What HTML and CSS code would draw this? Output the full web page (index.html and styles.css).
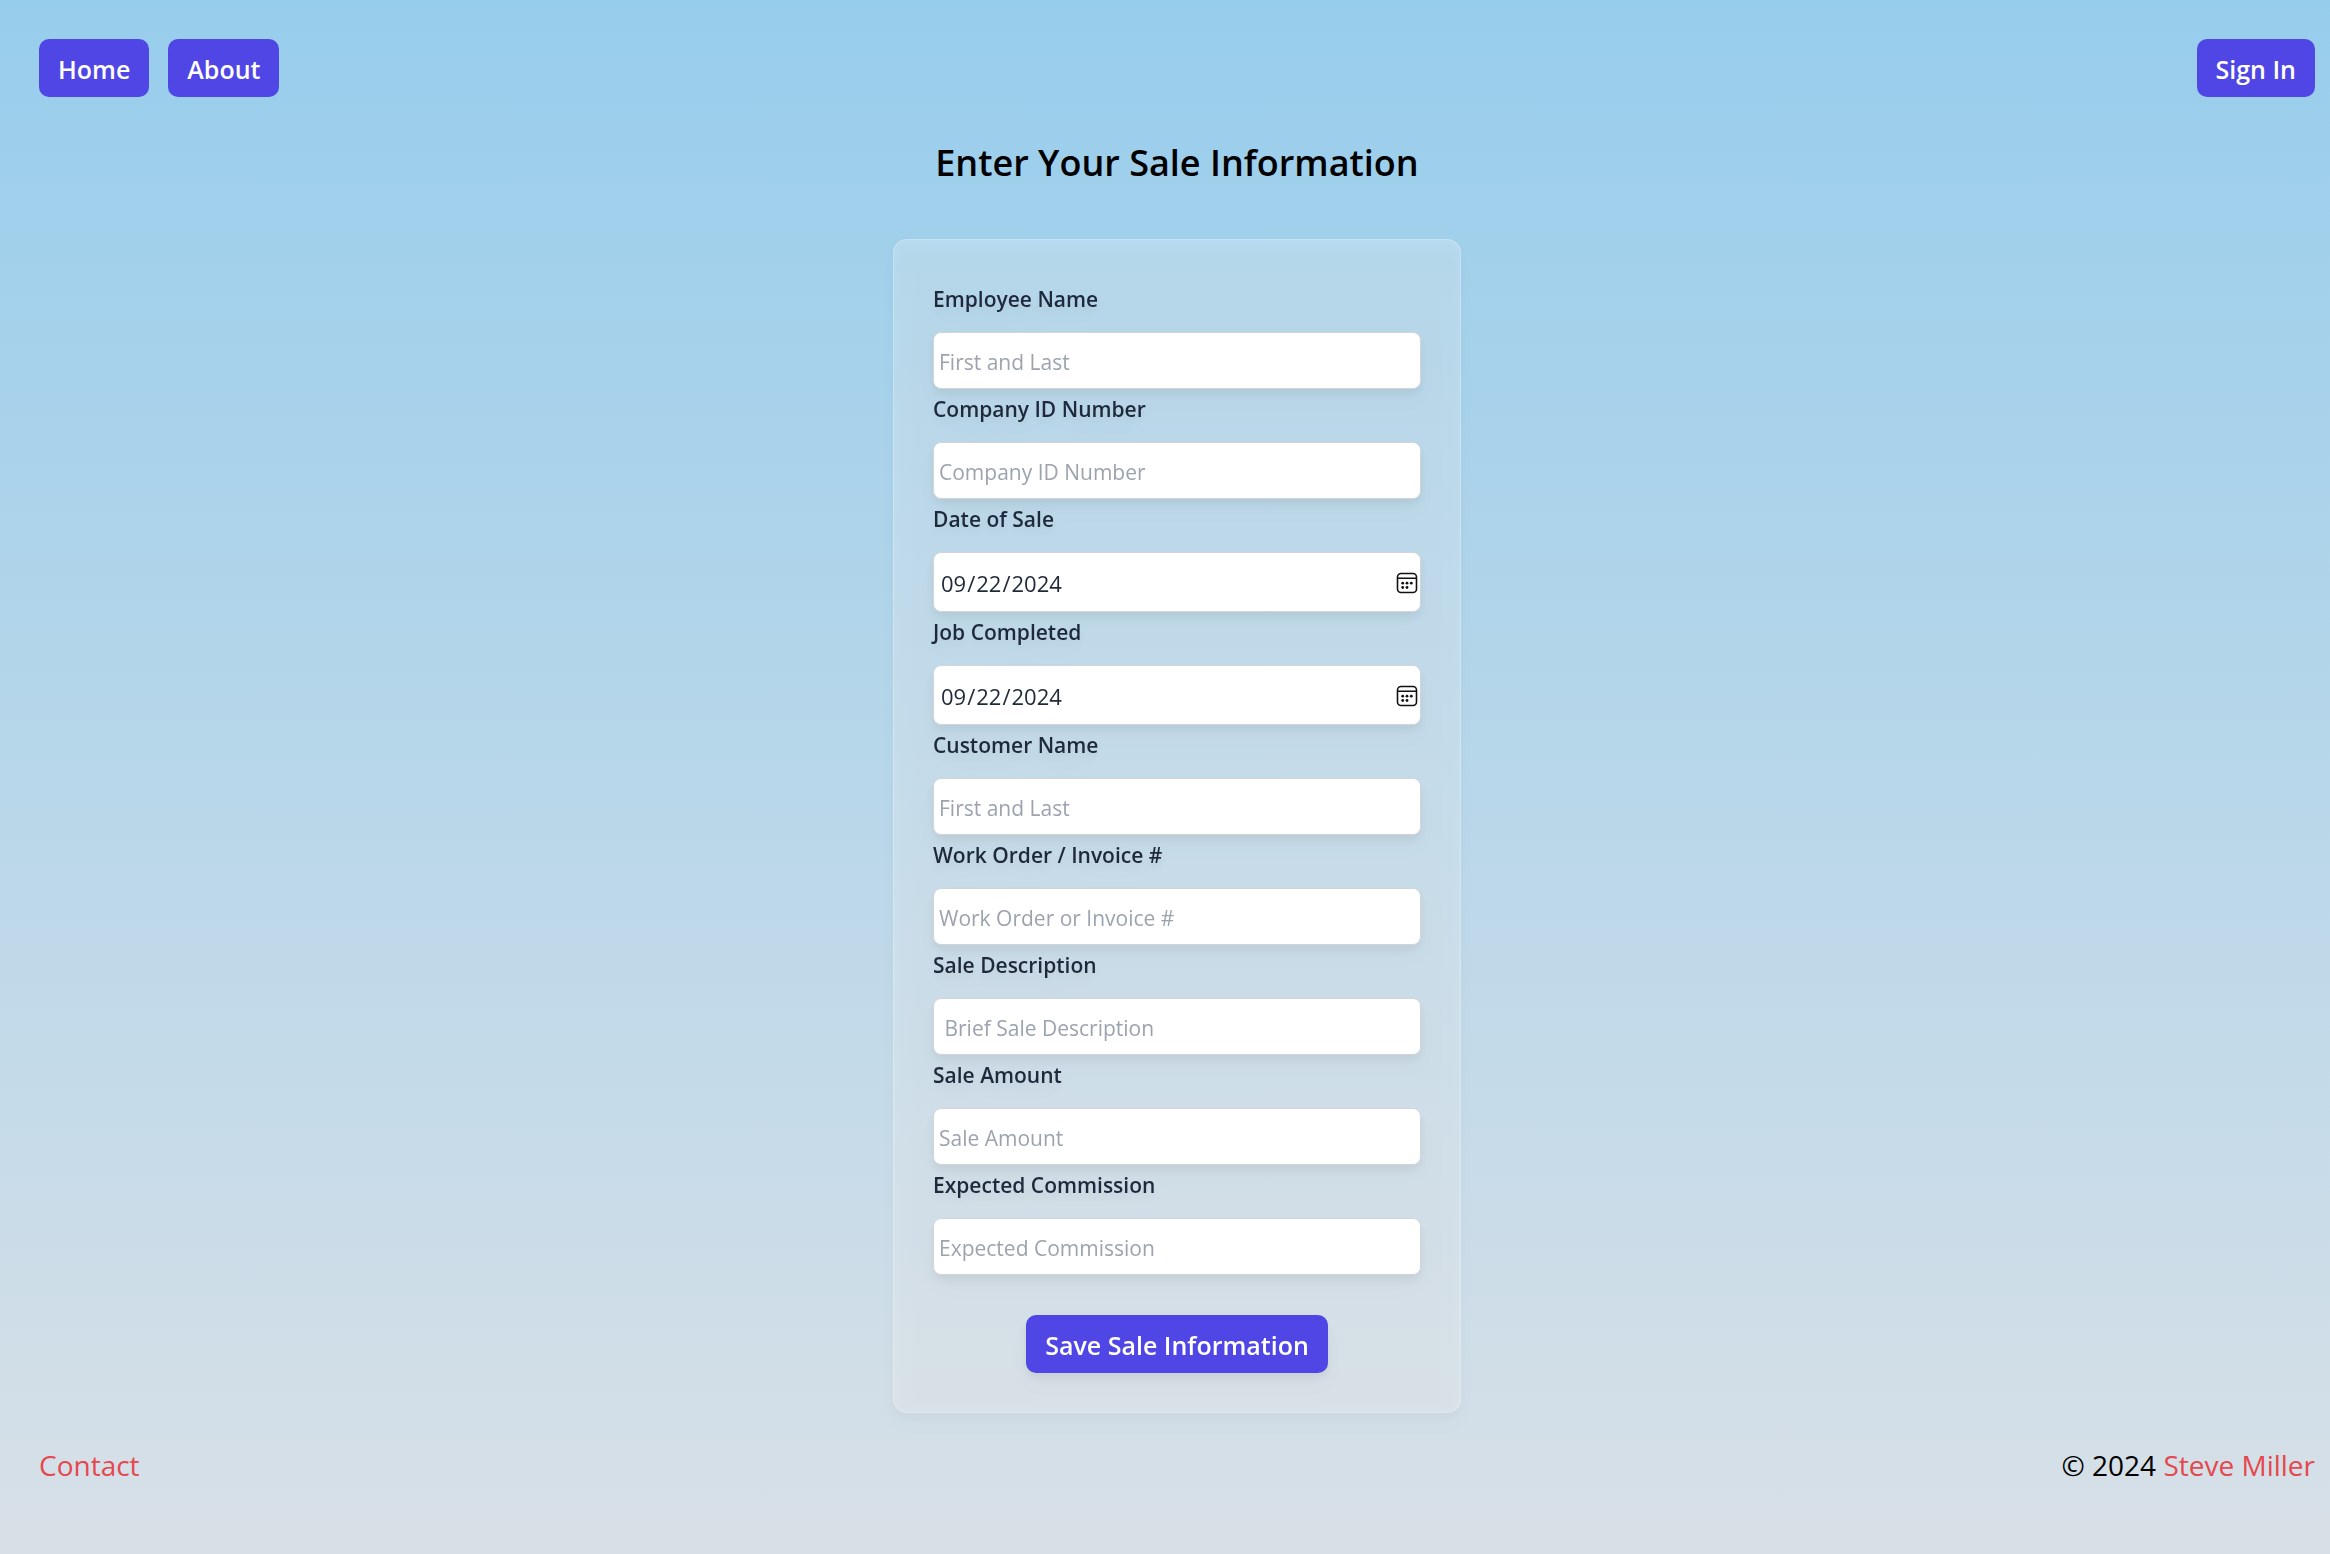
FILE: index.html
```html
<!DOCTYPE html>
<html lang="en">
<head>
  <meta charset="utf-8">
  <meta name="viewport" content="width=device-width, initial-scale=1">
  <title>Enter Your Sale Information</title>
  <link rel="stylesheet" href="styles.css">
</head>
<body>
  <header class="site-header">
    <nav class="site-nav">
      <button class="btn" type="button">Home</button>
      <button class="btn" type="button">About</button>
    </nav>
    <button class="btn" type="button">Sign In</button>
  </header>

  <main class="content">
    <h1 class="title">Enter Your Sale Information</h1>
    <form class="card">
      <label class="label" for="employee">Employee Name</label>
      <input class="field" id="employee" type="text" placeholder="First and Last">
      <label class="label" for="company-id">Company ID Number</label>
      <input class="field" id="company-id" type="text" placeholder="Company ID Number">
      <label class="label" for="sale-date">Date of Sale</label>
      <input class="field field-date" id="sale-date" type="date" value="2024-09-22">
      <label class="label" for="job-date">Job Completed</label>
      <input class="field field-date" id="job-date" type="date" value="2024-09-22">
      <label class="label" for="customer">Customer Name</label>
      <input class="field" id="customer" type="text" placeholder="First and Last">
      <label class="label" for="invoice">Work Order / Invoice #</label>
      <input class="field" id="invoice" type="text" placeholder="Work Order or Invoice #">
      <label class="label" for="description">Sale Description</label>
      <input class="field" id="description" type="text" placeholder=" Brief Sale Description">
      <label class="label" for="amount">Sale Amount</label>
      <input class="field" id="amount" type="text" placeholder="Sale Amount">
      <label class="label" for="commission">Expected Commission</label>
      <input class="field" id="commission" type="text" placeholder="Expected Commission">
      <button class="btn btn-save" type="submit">Save Sale Information</button>
    </form>
  </main>

  <footer class="site-footer">
    <a class="link" href="#contact">Contact</a>
    <p class="copyright">© 2024 <a class="link" href="#author">Steve Miller</a></p>
  </footer>
</body>
</html>
```
FILE: styles.css
```css
* {
  box-sizing: border-box;
}

body {
  margin: 0;
  min-height: 100vh;
  padding: 39px 15px 39px 39px;
  font-family: "Segoe UI", "Open Sans", sans-serif;
  color: #000;
  background: linear-gradient(to bottom, #97cdec, #d8e0e7);
}

.site-header,
.site-footer {
  display: flex;
  align-items: center;
  justify-content: space-between;
}

.site-nav {
  display: flex;
  gap: 19px;
}

.btn {
  height: 58px;
  padding: 2px 19px 0;
  border: 0;
  border-radius: 10px;
  font: inherit;
  font-size: 25px;
  font-weight: 600;
  color: #fff;
  background: #4f46e5;
  cursor: pointer;
}

.content {
  display: flex;
  flex-direction: column;
  align-items: center;
}

.title {
  margin: 42px 0 52px;
  font-size: 36px;
  font-weight: 600;
  line-height: 48px;
}

.card {
  display: flex;
  flex-direction: column;
  width: 100%;
  max-width: 568px;
  padding: 39px;
  border: 1px solid rgba(255, 255, 255, 0.2);
  border-radius: 14px;
  background: rgba(255, 255, 255, 0.25);
  filter: drop-shadow(0 12px 10px rgba(0, 0, 0, 0.04)) drop-shadow(0 5px 4px rgba(0, 0, 0, 0.1));
}

.label {
  padding: 5px 0 18px;
  font-size: 21px;
  font-weight: 600;
  line-height: 30px;
  color: #1e293b;
}

.field {
  height: 57px;
  padding: 2px 5px 0;
  border: 1px solid #d1d5db;
  border-radius: 8px;
  font: inherit;
  font-size: 21px;
  color: #1f2937;
  background: #fff;
}

.field::placeholder {
  color: #9ca3af;
  opacity: 1;
}

.field-date {
  height: 60px;
  padding: 2px 2px 0 6px;
  font-size: 22px;
}

.field-date::-webkit-datetime-edit,
.field-date::-webkit-datetime-edit-fields-wrapper {
  padding: 0;
}

.field-date::-webkit-calendar-picker-indicator {
  width: 22px;
  height: 22px;
  margin: 0;
  padding: 0;
  background: url("data:image/svg+xml,%3Csvg xmlns='http://www.w3.org/2000/svg' viewBox='0 0 22 22' fill='none' stroke='%23111'%3E%3Crect x='1.5' y='1.5' width='19' height='19' rx='3.5' stroke-width='1.6'/%3E%3Cpath d='M1.5 6.2h19' stroke-width='1.5'/%3E%3Cg fill='%23111' stroke='none'%3E%3Ccircle cx='6.7' cy='11.2' r='1.4'/%3E%3Ccircle cx='11' cy='11.2' r='1.4'/%3E%3Ccircle cx='15.3' cy='11.2' r='1.4'/%3E%3Ccircle cx='6.7' cy='15.5' r='1.4'/%3E%3Ccircle cx='11' cy='15.5' r='1.4'/%3E%3C/g%3E%3C/svg%3E") center / 22px 22px no-repeat;
}

.btn-save {
  align-self: center;
  margin-top: 40px;
}

.site-footer {
  margin-top: 32px;
  font-size: 28px;
  line-height: 40px;
}

.copyright {
  margin: 0;
}

.link {
  color: #e5484d;
  text-decoration: none;
}
```
